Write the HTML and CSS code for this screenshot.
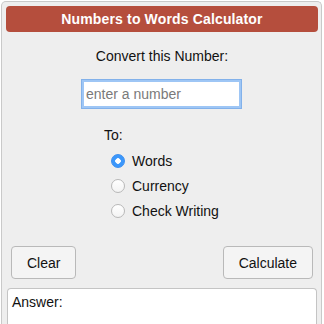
FILE: index.html
```html
<!DOCTYPE html>
<html>
<head>
<meta charset="utf-8">
<link rel="stylesheet" href="styles.css">
</head>
<body>
<div class="calc">
  <div class="title">Numbers to Words Calculator</div>
  <div class="prompt">Convert this Number:</div>
  <div class="input-row"><input class="num" type="text" placeholder="enter a number"></div>
  <div class="to">
    <div class="to-label">To:</div>
    <label class="opt"><input type="radio" name="m" checked><span>Words</span></label>
    <label class="opt"><input type="radio" name="m"><span>Currency</span></label>
    <label class="opt"><input type="radio" name="m"><span>Check Writing</span></label>
  </div>
  <div class="buttons">
    <button class="btn">Clear</button>
    <button class="btn">Calculate</button>
  </div>
  <div class="answer">Answer:</div>
</div>
</body>
</html>
```
FILE: styles.css
```css
html, body { margin: 0; padding: 0; background: #fff; }
body { font-family: "Liberation Sans", Arial, sans-serif; font-size: 14px; color: #111; overflow: hidden; height: 324px; }
.calc {
  margin: 1px 2px 0 1px;
  border: 1px solid #c9c9c9;
  border-bottom: none;
  border-radius: 5px 5px 0 0;
  background: #eeeeee;
  padding: 4px 3px 0 4px;
  height: 323px;
  box-sizing: border-box;
  display: flex;
  flex-direction: column;
}
.title {
  background: #b54e3d;
  color: #fff;
  font-weight: bold;
  font-size: 14px;
  text-align: center;
  height: 26px;
  line-height: 26px;
  border-radius: 4px;
  letter-spacing: 0.15px;
  flex: none;
}
.prompt { text-align: center; margin-top: 16px; line-height: 16px; }
.input-row { display: flex; justify-content: center; margin-top: 15px; }
.num {
  width: 161px;
  height: 30px;
  box-sizing: border-box;
  border: 1px solid #82b1ea;
  box-shadow: inset 0 0 0 2px #9ec6f5;
  outline: none;
  font-family: "Liberation Sans", Arial, sans-serif;
  font-size: 14px;
  padding: 0 4px;
  background: #fff;
  margin-right: 1px;
}
.num::placeholder { color: #7a7a7a; }
.to { margin: 18px 0 0 98px; display: flex; flex-direction: column; }
.to-label { line-height: 16px; }
.opt { display: flex; align-items: center; margin-left: 7px; height: 25px; }
.opt:first-of-type { margin-top: 5px; }
.opt input {
  appearance: none;
  -webkit-appearance: none;
  width: 14px; height: 14px;
  margin: 0 7px 0 0;
  border-radius: 50%;
  border: 1px solid #b8b8b8;
  background: linear-gradient(#fff, #f3f3f3);
  box-sizing: border-box;
}
.opt input:checked {
  border: 1px solid #3b8ff0;
  background: radial-gradient(circle, #fff 0 2.5px, #3b97fb 3px);
}
.buttons { display: flex; justify-content: space-between; padding: 0 5px; margin-top: 23px; }
.btn {
  height: 33px;
  padding: 0 15px;
  font-family: "Liberation Sans", Arial, sans-serif;
  font-size: 14px;
  color: #111;
  background: #f4f4f4;
  border: 1px solid #b9b9b9;
  border-radius: 4px;
}
.answer {
  margin: 9px 1px 0 1px;
  background: #fff;
  border: 1px solid #c4c4c4;
  border-bottom: none;
  border-radius: 4px 4px 0 0;
  flex: 1;
  padding: 5px 4px;
  line-height: 16px;
}
```
